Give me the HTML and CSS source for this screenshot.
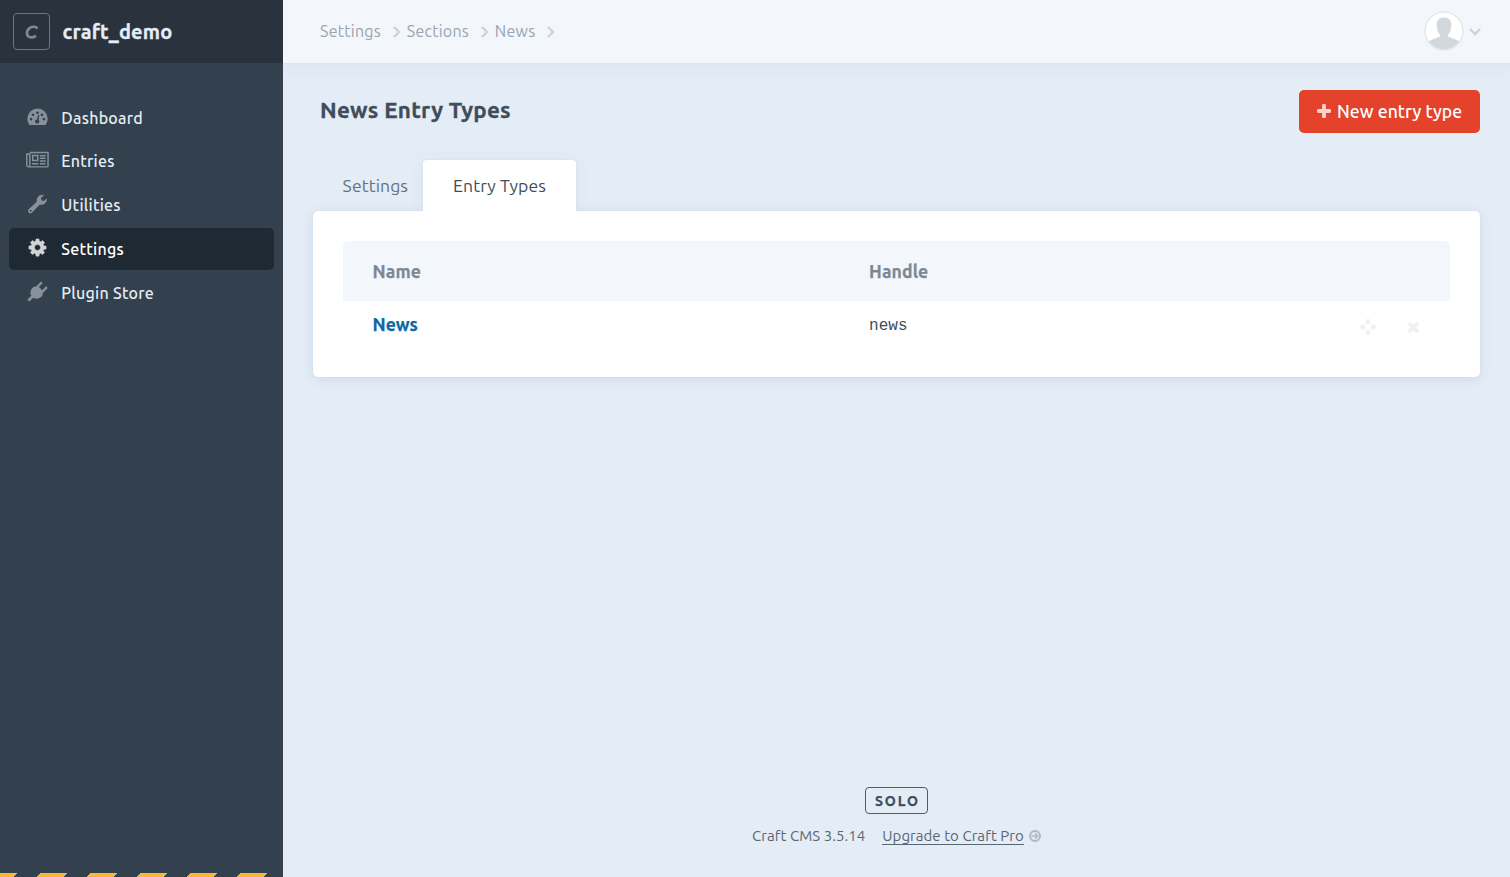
FILE: index.html
```html
<!DOCTYPE html>
<html lang="en">
<head>
<meta charset="utf-8">
<title>News Entry Types - craft_demo</title>
<link rel="stylesheet" href="styles.css">
</head>
<body>
<aside class="sidebar">
  <a class="site">
    <span class="site-icon"><svg width="14" height="14" viewBox="0 0 14 14"><path d="M12.600 3.400C10.400 1.400 6.800 1.300 4.300 3.300C1.300 6 1.300 10 3.700 11.600C6 13 8.700 12.400 10.900 10.600" fill="none" stroke="#7d8894" stroke-width="2.800"/></svg></span>
    <span class="site-name">craft_demo</span>
  </a>
  <nav class="nav">
    <a class="nav-item"><span class="nav-icon"><svg width="24" height="24" viewBox="0 0 24 24"><path transform="translate(0 1)" fill="currentColor" fill-rule="evenodd" d="M3.600 19.800A10.600 10.600 0 1 1 20.400 19.800ZM5.300 12.400a1.400 1.400 0 1 0 .01 0ZM7.300 7.800a1.400 1.400 0 1 0 .01 0ZM12 5.700a1.400 1.400 0 1 0 .01 0ZM16.700 7.800a1.400 1.400 0 1 0 .01 0ZM18.700 12.400a1.400 1.400 0 1 0 .01 0ZM12.700 9.200L11.500 14A2.200 2.200 0 1 0 13.100 14.500L13.900 9.600Z"/></svg></span><span class="label">Dashboard</span></a>
    <a class="nav-item"><span class="nav-icon"><svg width="24" height="24" viewBox="0 0 24 24"><g fill="none" stroke="currentColor" stroke-width="1.500"><path d="M4 4.600H23V18.700Q23 19.700 21.800 19.700H2.700Q.8 19.700 .8 18V6.300H4V18Q4 19.700 2.700 19.700"/><path d="M7 7.900H12.300V13.100H7ZM14.500 8H20.500M14.500 10.700H20.500M14.500 13.500H20.500M6.300 16.400H12.900M14.500 16.400H20.500"/></g></svg></span><span class="label">Entries</span></a>
    <a class="nav-item"><span class="nav-icon"><svg width="24" height="24" viewBox="0 0 24 24"><path fill="currentColor" fill-rule="evenodd" d="M2.800 18.100L11.300 10.300C10.400 6.200 13.600 2.200 18.800 3L15.500 6.500L16.400 8.900L18.800 9.300L21.700 6.400C22.200 11.300 18.200 14.200 14.500 13.100L6.400 21.500A2.300 2.300 0 0 1 2.800 18.100ZM4.900 18.700a.9.900 0 1 0 .01 0Z"/></svg></span><span class="label">Utilities</span></a>
    <a class="nav-item active"><span class="nav-icon"><svg width="24" height="24" viewBox="0 0 24 24"><path fill="currentColor" fill-rule="evenodd" d="M10.500 3H13.500L14 5.600L15.300 6.100L17.300 4.700L19.400 6.800L18 8.900L18.500 10.100L21 10.600V13.500L18.500 14L18 15.300L19.400 17.300L17.300 19.400L15.200 18L14 18.500L13.500 21H10.500L10 18.500L8.800 18L6.700 19.400L4.600 17.300L6 15.200L5.500 14L3 13.500V10.500L5.500 10L6 8.800L4.600 6.700L6.700 4.600L8.800 6L10 5.500ZM12 8.900a3.100 3.100 0 1 0 .01 0Z" stroke="currentColor" stroke-width=".5"/></svg></span><span class="label">Settings</span></a>
    <a class="nav-item"><span class="nav-icon"><svg width="24" height="24" viewBox="0 0 24 24"><path fill="currentColor" d="M6.500 8.500L8 7L10.500 6.800L15.400 1.800Q17.300 1.500 17.200 3.500L13.500 7.300L16.900 10.700L20.700 6.800Q22.700 6.600 22.500 8.700L17.500 13.500L17.300 16L16 17.500C13.500 20 10 20 7.500 18.500L3.800 22.200Q1.500 22.500 1.800 20.200L5.500 16.500C4 13.900 4.200 11 6.500 8.500Z"/></svg></span><span class="label">Plugin Store</span></a>
  </nav>
  <div class="devmode"></div>
</aside>
<div class="page">
  <header class="topbar">
    <nav class="crumbs">
      <span class="crumb">Settings</span><svg class="sep" width="10" height="14" viewBox="0 0 10 14"><path d="M2 2L7 7L2 12"/></svg>
      <span class="crumb">Sections</span><svg class="sep" width="10" height="14" viewBox="0 0 10 14"><path d="M2 2L7 7L2 12"/></svg>
      <span class="crumb">News</span><svg class="sep" width="10" height="14" viewBox="0 0 10 14"><path d="M2 2L7 7L2 12"/></svg>
    </nav>
    <div class="account">
      <svg class="avatar" width="42" height="42" viewBox="0 0 42 42"><defs><clipPath id="round"><circle cx="21" cy="21" r="18.500"/></clipPath></defs><circle cx="21" cy="21" r="19" fill="#fff" stroke="#e3e8ef" stroke-width="1.500"/><g clip-path="url(#round)" fill="#d3d8de"><path d="M21 7.500C26 7.500 28.700 10.500 28.300 15.500C28 20 26.700 23 25 25V29H17V25C15.300 23 14 20 13.700 15.500C13.300 10.500 16 7.500 21 7.500Z"/><path d="M3 33Q8 29.500 13.500 28Q16.500 27.200 17.500 26H24.500Q25.500 27.200 28.500 28Q34 29.500 39 33V42H3Z"/></g></svg>
      <svg class="caret" width="14" height="10" viewBox="0 0 14 10"><path d="M2 2L7 7L12 2"/></svg>
    </div>
  </header>
  <main class="main">
    <div class="heading">
      <h1 class="title">News Entry Types</h1>
      <a class="button"><svg class="plus" width="14" height="14" viewBox="0 0 14 14"><path d="M7 1.500V12.500M1.500 7H12.500" stroke="#fbd3cd" stroke-width="3.800" stroke-linecap="round"/></svg><span class="button-text">New entry type</span></a>
    </div>
    <div class="tabs">
      <a class="tab tab-settings"><span>Settings</span></a>
      <a class="tab selected"><span>Entry Types</span></a>
    </div>
    <section class="pane">
      <div class="row head"><span class="name">Name</span><span class="handle">Handle</span></div>
      <div class="row">
        <a class="name link">News</a><code class="handle">news</code>
        <span class="actions">
          <svg width="16" height="16" viewBox="0 0 16 16" fill="#eff1f3"><circle cx="8" cy="2.700" r="2.700"/><circle cx="2.700" cy="8" r="2.700"/><circle cx="13.300" cy="8" r="2.700"/><circle cx="8" cy="13.300" r="2.700"/></svg>
          <svg width="13" height="13" viewBox="0 0 12 12"><path d="M1.700 1.700L10.300 10.300M10.300 1.700L1.700 10.300" stroke="#eff1f3" stroke-width="3.600"/></svg>
        </span>
      </div>
    </section>
  </main>
  <footer class="footer">
    <span class="edition">SOLO</span>
    <div class="versions"><span class="version">Craft CMS 3.5.14</span><a class="upgrade">Upgrade to Craft Pro</a><svg class="go" width="12" height="12" viewBox="0 0 12 12"><circle cx="6" cy="6" r="5" fill="none" stroke="#aeb9c4" stroke-width="2"/><path d="M2.500 6H8.500M6 3.300L8.700 6L6 8.700" fill="none" stroke="#aeb9c4" stroke-width="1.400"/></svg></div>
  </footer>
</div>
</body>
</html>
```

FILE: styles.css
```css
* { box-sizing: border-box; }
body {
  margin: 0;
  height: 877px;
  display: flex;
  overflow: hidden;
  background: #e4ecf6;
  color: #3f4d5a;
  font-family: Ubuntu, "Noto Sans", sans-serif;
  font-size: 16px;
  line-height: 20px;
  white-space: nowrap;
}
svg { display: block; flex: none; }
.sidebar { position: relative; z-index: 1; width: 283px; flex: none; background: #33404d; display: flex; flex-direction: column; }
.site { height: 63px; padding-left: 13px; display: flex; align-items: center; gap: 12.500px; background: #29323d; }
.site-icon { width: 37px; height: 37px; border: 1px solid #697581; border-radius: 4px; display: flex; align-items: center; justify-content: center; }
.site-name { font-size: 20px; font-weight: 700; color: #e4edf6; letter-spacing: 0.15px; -webkit-text-stroke: 0.3px; }
.nav { padding: 34px 9px 0; display: flex; flex-direction: column; gap: 2px; flex: 1; }
.nav-item { height: 41.8px; padding: 0 17px; display: flex; align-items: center; gap: 12.300px; border-radius: 5px; color: #e4edf6; font-weight: 500; letter-spacing: 0.25px; }
.nav-item:first-child { height: 41.400px; }
.nav-icon { width: 23px; height: 24px; color: #86919b; margin-top: -2px; }
.nav-icon svg { width: 23px; height: 23px; }
.active { background: #1f2933; color: #fff; }
.active .nav-icon { color: #d2d4d6; }
.devmode { height: 4px; background: repeating-linear-gradient(135deg, #fab733 0 12.300px, #33404d 12.300px 28.700px, #fab733 28.700px 35.355px); }
.page { flex: 1; display: flex; flex-direction: column; }
.topbar { height: 63px; background: #f3f6fb; padding: 0 28px 0 37px; display: flex; align-items: center; justify-content: space-between; box-shadow: 0 1px 0 #dbe3ec, 0 2px 12px #cddbe780; }
.crumbs { display: flex; align-items: center; color: #98a5b3; letter-spacing: 0.25px; }
.crumb { margin-top: -1px; }
.sep { margin: 0 5px 0 10.800px; }
.sep path, .caret path { fill: none; stroke: #cdd2d9; stroke-width: 2.4; }
.account { display: flex; align-items: center; gap: 3px; }
.avatar { margin-top: -1px; }
.main { flex: 1; padding: 27px 30px 0; }
.heading { display: flex; align-items: center; justify-content: space-between; padding-left: 7px; height: 43px; }
.title { margin: -3px 0 0; font-size: 22.400px; line-height: 30px; font-weight: 700; letter-spacing: 0.25px; -webkit-text-stroke: 0.3px; }
.button { width: 181px; height: 43px; padding-left: 18px; display: flex; align-items: center; gap: 6px; color: #fff; background: #e5422b; border-radius: 5px; font-size: 17.600px; font-weight: 500; letter-spacing: 0.05px; }
.plus { margin-top: -1px; }
.tabs { display: flex; margin-top: 27px; padding-left: 15px; font-size: 17.600px; height: 51px; letter-spacing: 0.08px; }
.tab { display: flex; align-items: center; justify-content: center; width: 95px; color: #65727f; }
.tab-settings { justify-content: flex-start; padding-left: 14.600px; }
.selected { position: relative; z-index: 1; width: 153px; background: #fff; color: #3f4d5a; border-radius: 4px 4px 0 0; box-shadow: 0 0 0 1px #cddbe740, 0 2px 12px #cddbe780; clip-path: inset(-14px -14px 0); }
.pane { position: relative; height: 166px; padding: 30px; background: #fff; border-radius: 5px; box-shadow: 0 0 0 1px #cddbe740, 0 2px 12px #cddbe7; }
.row { height: 48px; display: grid; grid-template-columns: 496.5px 1fr auto; align-items: center; padding: 0 30px 0 29.600px; font-size: 17.600px; }
.head { height: 60px; padding-top: 2px; background: #f3f6fb; color: #7b8894; font-weight: 700; border-radius: 5px 5px 0 0; letter-spacing: 0.1px; -webkit-text-stroke: 0.25px; }
.link { color: #0b69a3; font-weight: 700; -webkit-text-stroke: 0.25px; }
code { font: 16px "Liberation Mono", monospace; padding-top: 2px; }
.actions { display: flex; align-items: center; gap: 31px; margin-top: 4px; }
.footer { height: 90px; display: flex; flex-direction: column; align-items: center; font-size: 15px; }
.edition { height: 27px; border: 1px solid #4d5b6a; border-radius: 4px; width: 63px; display: flex; align-items: center; justify-content: center; font-size: 14px; font-weight: 700; letter-spacing: 1.900px; padding-left: 2px; -webkit-text-stroke: 0.25px; }
.versions { display: flex; align-items: center; margin-top: 12px; color: #596673; letter-spacing: 0.05px; }
.upgrade { margin: 0 5px 0 17px; line-height: 16px; border-bottom: 1px solid #596673; }
```
